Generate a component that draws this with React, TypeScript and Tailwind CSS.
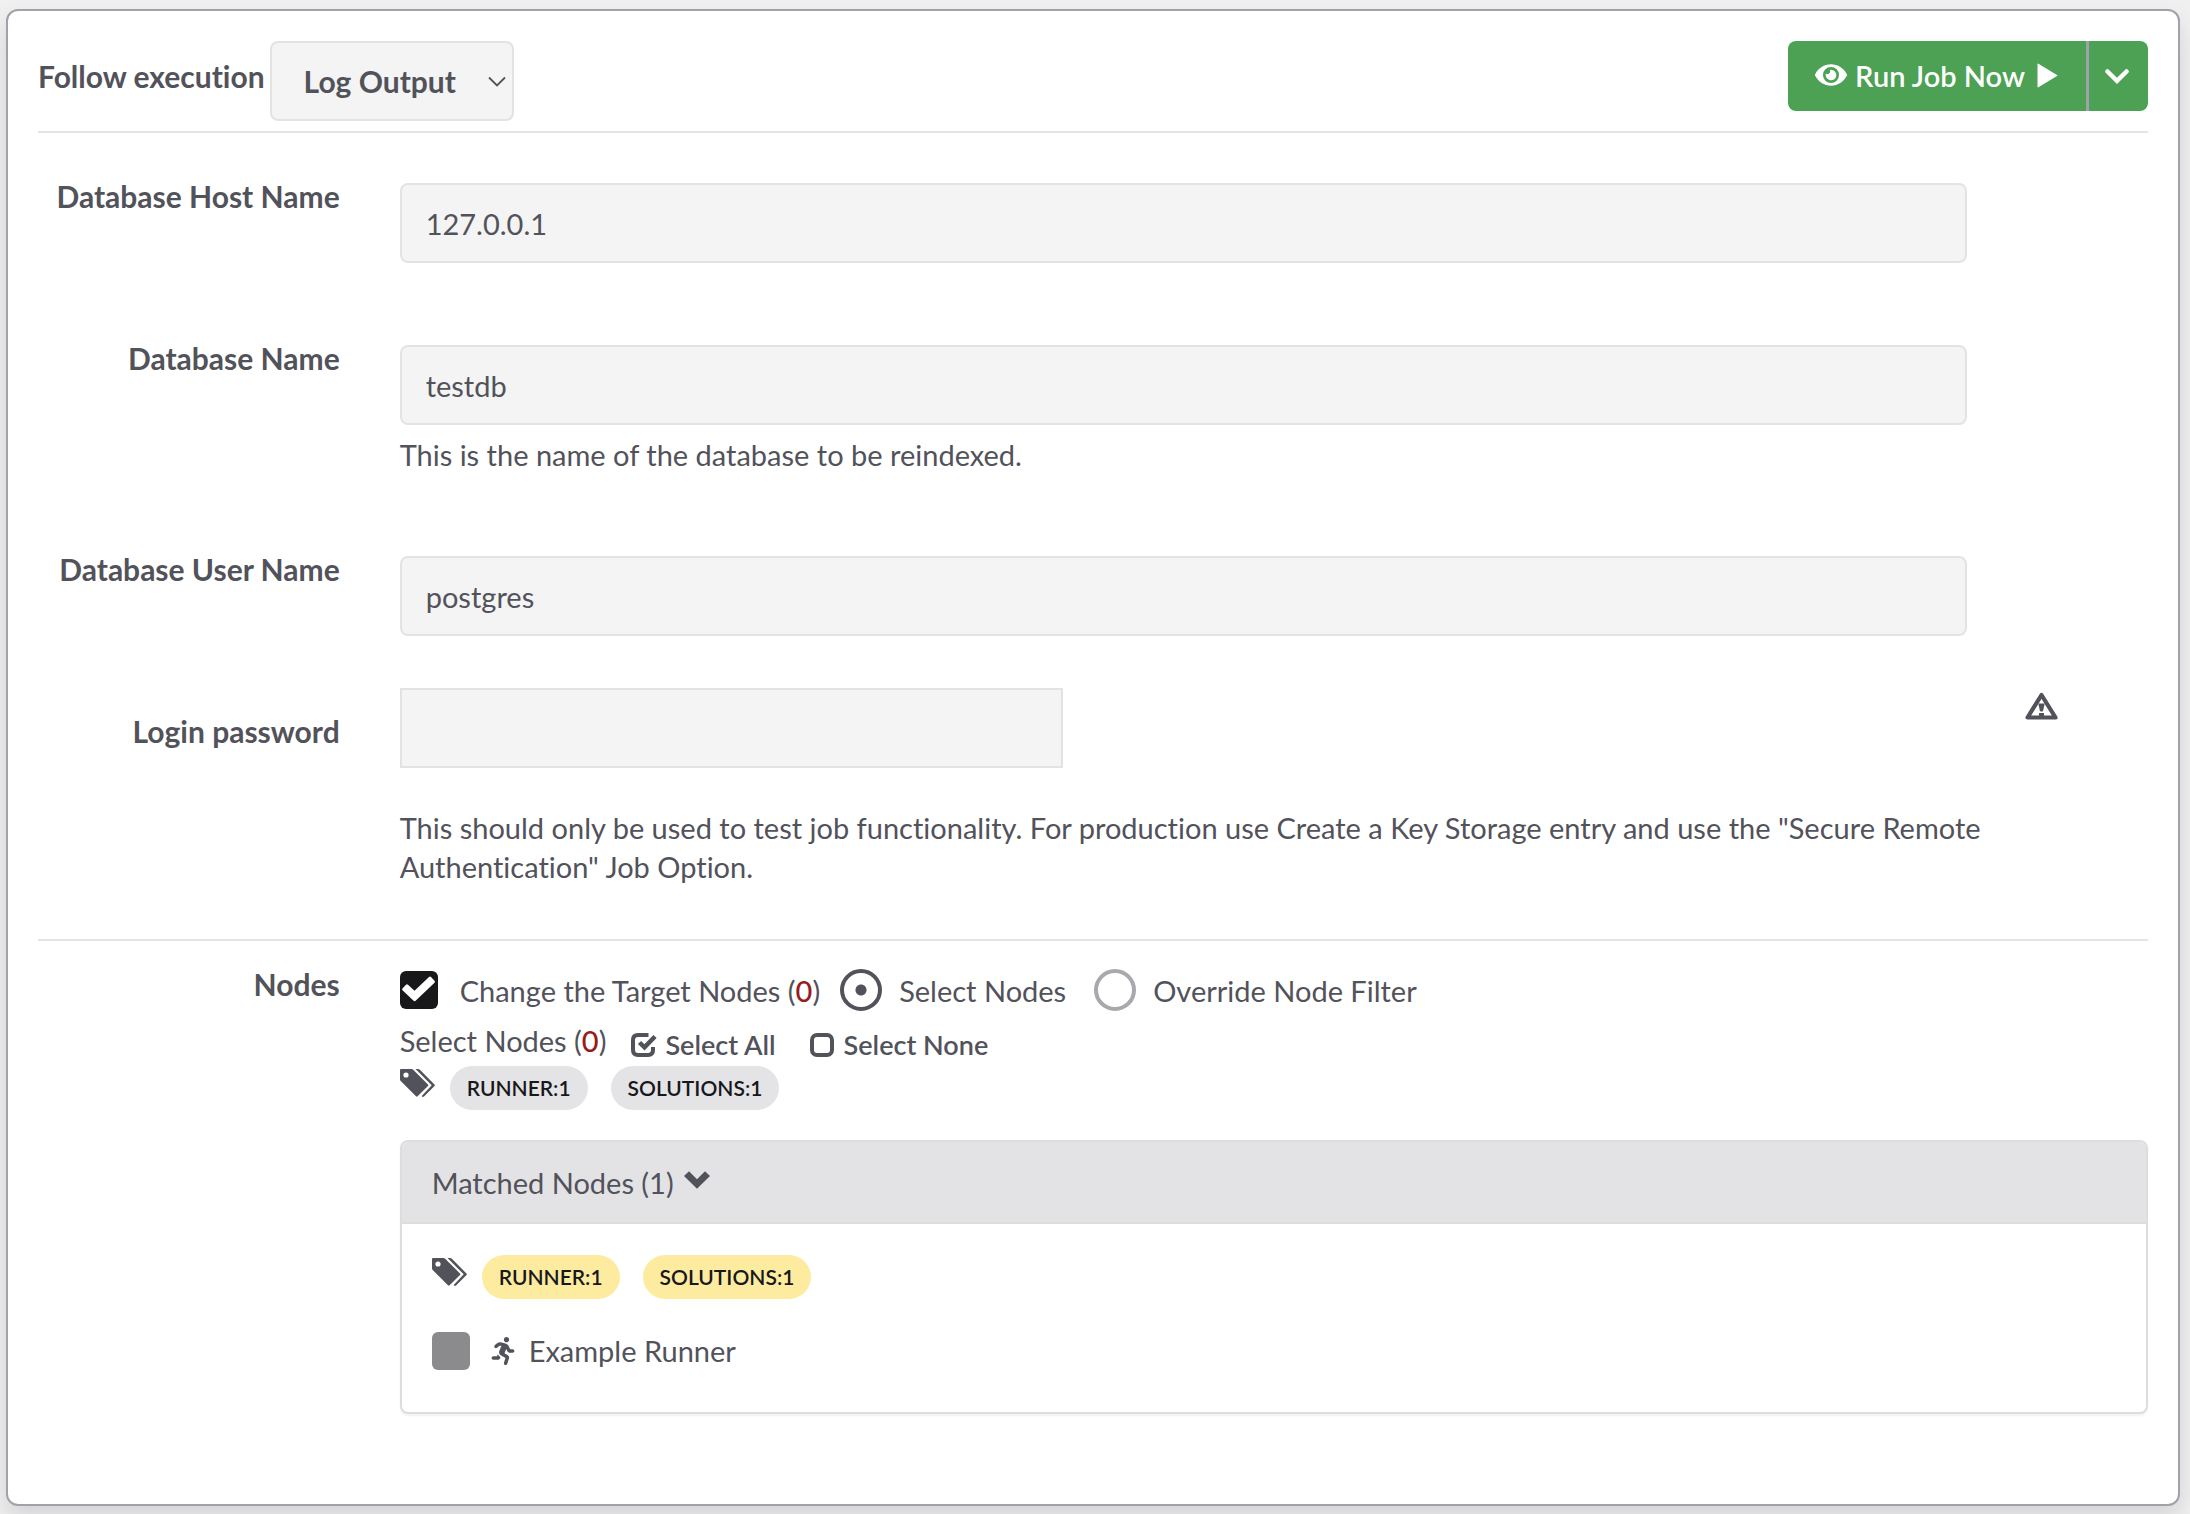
import React, { useState } from 'react';
import { FaEye, FaRunning } from 'react-icons/fa';

/* Icons */
const PlayIcon: React.FC = () => (
  <svg viewBox="0 0 21 25" className="h-[25px] w-[21px] fill-current" aria-hidden="true">
    <path d="M.5 1.2v22.6c0 .5.5.7.9.5L20 13.1c.5-.3.5-.9 0-1.200L1.400.7C1 .5.5.7.5 1.200z" />
  </svg>
);

const ThinChevron: React.FC = () => (
  <svg viewBox="0 0 18 12" className="pointer-events-none absolute top-[35px] right-2 h-3 w-[18px]" fill="none" stroke="currentColor" strokeWidth="1.8" aria-hidden="true">
    <path d="M1 1.500 9 9.500 17 1.500" />
  </svg>
);

const CaretIcon: React.FC = () => (
  <svg viewBox="0 0 24 15" className="h-[15px] w-6" fill="none" stroke="currentColor" strokeWidth="4.500" strokeLinecap="round" aria-hidden="true">
    <path d="M2.500 2.500 12 11.800 21.500 2.500" />
  </svg>
);

const ChevronDown: React.FC = () => (
  <svg viewBox="0 0 26 18" className="mb-1 h-[18px] w-[26px] fill-current" aria-hidden="true">
    <path d="M0 5 5 .300 13 8.300 21 .300 26 5 13 17.800z" />
  </svg>
);

const TagsIcon: React.FC = () => (
  <svg viewBox="0 0 35 28" className="h-7 w-[35px] shrink-0" aria-hidden="true">
    <path fill="currentColor" fillRule="evenodd" d="M0 1Q0 0 1 0h10.500q1 0 1.700.700L28 15.500q.700.800 0 1.600L17.600 27.300q-.800.700-1.600 0L.700 12Q0 11.300 0 10.500zM6 3.400a2.600 2.600 0 1 0 0 5.200 2.600 2.600 0 0 0 0-5.200z" />
    <path fill="currentColor" d="M15.500 0h2.700q.800 0 1.400.600L34.500 15.500q.700.800 0 1.600L24 27.500q-1 .800-2 0l-.300-.500 10-10.700z" />
  </svg>
);

const WarningIcon: React.FC = () => (
  <svg viewBox="0 0 33 28" className="h-7 w-[33px]" aria-label="Warning" role="img">
    <path fill="none" stroke="currentColor" strokeWidth="4.200" strokeLinejoin="round" d="M16.500 3 30.500 25.500H2.500z" />
    <path fill="currentColor" d="M13.300 11.500h6.400l-1.500 7q-.200 1-1.200 1h-1q-1 0-1.200-1zM14 21h5v4h-5z" />
  </svg>
);

const CheckSquareIcon: React.FC = () => (
  <svg viewBox="0 0 26 24" className="h-6 w-[26px]" fill="none" stroke="currentColor" aria-hidden="true">
    <path strokeWidth="4" d="M17.500 2H7Q2 2 2 7v10q0 5 5 5h10q5 0 5-5v-3" />
    <path strokeWidth="4.500" d="m8.500 9.500 5 4.800L24 3.500" />
  </svg>
);

const SquareIcon: React.FC = () => (
  <svg viewBox="0 0 26 24" className="h-6 w-[26px]" fill="none" stroke="currentColor" strokeWidth="4" aria-hidden="true">
    <rect x="2" y="2" width="20" height="20" rx="5" />
  </svg>
);

interface FieldProps {
  id: string;
  label: string;
  value: string;
  help?: string;
}

const Field: React.FC<FieldProps> = ({ id, label, value, help }) => (
  <div className="grid grid-cols-12">
    <label htmlFor={id} className="col-span-2 px-[30px] text-right text-[30px] leading-[26px] font-bold">
      {label}
    </label>
    <div className="col-span-9 px-[30px]">
      <input
        id={id}
        type="text"
        defaultValue={value}
        className="block h-20 w-full rounded-lg border-2 border-[#e3e3e3] bg-[#f4f4f4] px-6 outline-none"
      />
      {help && <p className="mt-[10px]">{help}</p>}
    </div>
  </div>
);

const TAGS = ['RUNNER:1', 'SOLUTIONS:1'];

const TagList: React.FC<{ badgeClass: string }> = ({ badgeClass }) => (
  <div className="flex">
    <TagsIcon />
    <div className="-mt-[3px] ml-[15px] flex gap-[23px]">
      {TAGS.map((tag) => (
        <a
          key={tag}
          href="#tags"
          className={`h-11 rounded-full px-[17px] text-[21px] leading-[44px] font-semibold text-[#18181b] ${badgeClass}`}
        >
          {tag}
        </a>
      ))}
    </div>
  </div>
);

const App: React.FC = () => {
  const [mode, setMode] = useState('select');
  const [changeTarget, setChangeTarget] = useState(true);

  return (
    <div className="min-h-screen bg-[#f0f0f0] pt-[9px] pr-[10px] pb-2 pl-[6px] font-['Lato',sans-serif] text-[29px] leading-[39px] text-[#52525b] [font-variant-ligatures:none]">
      <form
        className="rounded-xl border-2 border-[#a1a1aa] bg-white px-[30px] pt-[30px] pb-[90px] shadow-[0_12px_24px_rgba(0,0,0,0.12)]"
        onSubmit={(e) => e.preventDefault()}
      >
        {/* Header */}
        <div className="flex items-start justify-between border-b-2 border-[#e4e4e7] pb-[10px]">
          <div className="flex items-start gap-[5px]">
            <label htmlFor="follow" className="pt-4 text-[30px] font-bold">Follow execution</label>
            <div className="relative">
              <select
                id="follow"
                className="h-20 w-[244px] appearance-none rounded-lg border-2 border-[#e3e3e3] bg-[#f4f4f4] pl-8 text-[30px] font-bold outline-none"
              >
                <option>Log Output</option>
              </select>
              <ThinChevron />
            </div>
          </div>
          <div className="flex h-[70px] text-white">
            <button type="submit" className="flex items-center rounded-l-lg bg-[#4ca154] pr-7 pb-[2px] pl-[27px] font-semibold">
              <FaEye className="mr-2 size-8" />
              Run Job Now
              <span className="ml-3"><PlayIcon /></span>
            </button>
            <button type="button" aria-label="More run options" className="flex w-[62px] items-center justify-center rounded-r-lg border-l-[3px] border-[#a1a1aa] bg-[#4ca154] pr-1">
              <CaretIcon />
            </button>
          </div>
        </div>

        {/* Options */}
        <div className="-mx-[30px] pt-[50px]">
          <Field id="host" label="Database Host Name" value="127.0.0.1" />
          <div className="mt-[82px]">
            <Field id="dbname" label="Database Name" value="testdb" help="This is the name of the database to be reindexed." />
          </div>
          <div className="mt-[82px]">
            <Field id="user" label="Database User Name" value="postgres" />
          </div>
          <div className="mt-[52px] grid grid-cols-12">
            <label htmlFor="password" className="col-span-2 px-[30px] pt-[30px] text-right text-[30px] leading-[26px] font-bold">
              Login password
            </label>
            <div className="col-span-4 px-[30px]">
              <input
                id="password"
                type="password"
                className="block h-20 w-full border-2 border-[#e3e3e3] bg-[#f4f4f4] px-6 outline-none"
              />
            </div>
            <div className="col-start-12 px-[28px] pt-1">
              <WarningIcon />
            </div>
            <p className="col-span-10 col-start-3 px-[30px] pt-10">
              This should only be used to test job functionality. For production use Create a Key Storage entry and use
              the "Secure Remote Authentication" Job Option.
            </p>
          </div>
        </div>

        {/* Nodes */}
        <div className="mt-[53px] border-t-2 border-[#e4e4e7]">
          <div className="-mx-[30px] grid grid-cols-12 pt-7">
            <span className="col-span-2 px-[30px] text-right text-[30px] leading-[30px] font-bold">Nodes</span>
            <div className="col-span-10 px-[30px]">
              <div className="flex h-[42px] items-center">
                <label className="flex items-center">
                  <span className="relative mr-[22px] size-[38px]">
                    <input
                      type="checkbox"
                      checked={changeTarget}
                      onChange={(e) => setChangeTarget(e.target.checked)}
                      className="peer block size-[38px] appearance-none rounded-md bg-[#8b8b8d] checked:bg-[#18181b]"
                    />
                    <svg viewBox="0 0 38 38" className="pointer-events-none absolute inset-0 hidden size-[38px] fill-white peer-checked:block" aria-hidden="true">
                      <path d="M2.500 17.500 6 13.800q1-1 2 0l6.500 6L29 6q1-1 2 0l3.500 3.700q1 1 0 2L15.600 29.800q-1 .900-2 0L2.500 19.300q-.900-.900 0-1.800z" />
                    </svg>
                  </span>
                  <span>Change the Target Nodes (<span className="font-medium text-[#991b1b]">0</span>)</span>
                </label>
                <label className="ml-5 flex items-center gap-[17px]">
                  <input
                    type="radio"
                    name="mode"
                    checked={mode === 'select'}
                    onChange={() => setMode('select')}
                    className="size-[42px] appearance-none rounded-full border-4 border-[#a8a8ad] checked:border-[#52525b] checked:bg-[radial-gradient(circle,#52525b_5px,transparent_6px)]"
                  />
                  Select Nodes
                </label>
                <label className="ml-7 flex items-center gap-[17px]">
                  <input
                    type="radio"
                    name="mode"
                    checked={mode === 'override'}
                    onChange={() => setMode('override')}
                    className="size-[42px] appearance-none rounded-full border-4 border-[#a8a8ad] checked:border-[#52525b] checked:bg-[radial-gradient(circle,#52525b_5px,transparent_6px)]"
                  />
                  Override Node Filter
                </label>
              </div>

              <div className="mt-[10px] flex items-start">
                <span>Select Nodes (<span className="font-medium text-[#991b1b]">0</span>)</span>
                <button type="button" className="ml-[25px] flex items-center gap-2 pt-1 text-[27px] font-semibold">
                  <CheckSquareIcon />
                  Select All
                </button>
                <button type="button" className="ml-[34px] flex items-center gap-2 pt-1 text-[27px] font-semibold">
                  <SquareIcon />
                  Select None
                </button>
              </div>
              <div className="mt-[5px]">
                <TagList badgeClass="bg-[#e4e4e7]" />
              </div>

              {/* Matched nodes */}
              <div className="mt-[30px] rounded-lg border-2 border-[#dddddd] shadow-[0_2px_2px_rgba(0,0,0,0.05)]">
                <button
                  type="button"
                  className="flex h-[82px] w-full items-center gap-[10px] rounded-t-md border-b-2 border-[#dddddd] bg-[#e3e3e5] px-[30px]"
                >
                  Matched Nodes (1)
                  <ChevronDown />
                </button>
                <div className="px-[30px] pt-[34px] pb-[42px]">
                  <TagList badgeClass="bg-[#fdec9f]" />
                  <label className="mt-8 flex items-center">
                    <input type="checkbox" className="size-[38px] appearance-none rounded-md bg-[#8b8b8d]" />
                    <FaRunning className="ml-[21px] h-7 w-6" />
                    <span className="ml-[14px]">Example Runner</span>
                  </label>
                </div>
              </div>
            </div>
          </div>
        </div>
      </form>
    </div>
  );
};

export default App;
